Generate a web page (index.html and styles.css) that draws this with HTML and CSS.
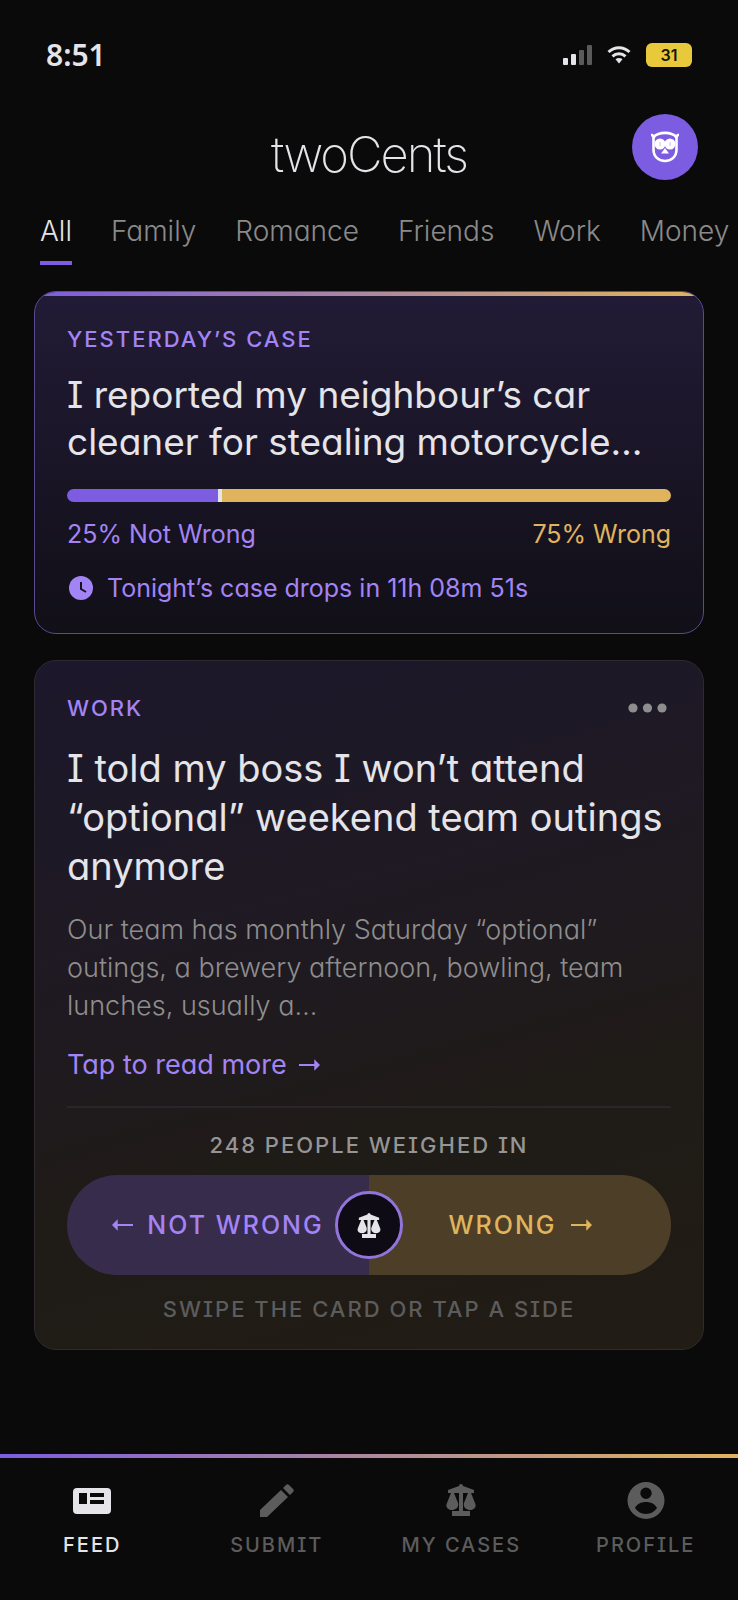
FILE: index.html
```html
<!DOCTYPE html>
<html lang="en">
<head>
    <meta charset="UTF-8">
    <meta name="viewport" content="width=device-width, initial-scale=1.0">
    <title>twoCents</title>
    <link rel="stylesheet" href="styles.css">
</head>
<body>
    <!-- Shared symbols -->
    <svg class="sprite" aria-hidden="true">
        <symbol id="scales" viewBox="0 0 30 32">
            <path d="M15 0a2 2 0 0 1 2 2l11 4v3h-3l4 10c2 4-1 7-5 7s-7-3-6-7l4-10h-5v18h7v5H6v-5h7V9H8l4 10c1 4-2 7-6 7s-7-3-5-7L5 9H2V6l11-4a2 2 0 0 1 2-2z"/>
        </symbol>
        <symbol id="arrow" viewBox="0 0 22 12">
            <path d="M0 5h16V0l6 6-6 6V7H0z"/>
        </symbol>
    </svg>

    <div class="status">
        <span class="time">8:51</span>
        <div class="status-icons">
            <svg width="29" height="20" viewBox="0 0 29 20">
                <g fill="#e4e4e9">
                    <rect y="13" width="5" height="7" rx="1"/>
                    <rect x="8" y="9" width="5" height="11" rx="1"/>
                </g>
                <g fill="#5a5a5a">
                    <rect x="16" y="5" width="5" height="15" rx="1"/>
                    <rect x="24" width="5" height="20" rx="1"/>
                </g>
            </svg>
            <svg class="wifi" width="24" height="18" viewBox="0 0 24 18">
                <g fill="none" stroke="#e4e4e9" stroke-width="3">
                    <path d="M1.500 6C7.500 .3 16.500 .3 22.500 6"/>
                    <path d="M5.500 10.300c3.700-3.400 9.300-3.400 13 0"/>
                </g>
                <path d="M8.500 13.200c2-1.700 5-1.700 7 0L12 17.500z" fill="#e4e4e9"/>
            </svg>
            <span class="battery">31</span>
        </div>
    </div>

    <header class="header">
        <h1>twoCents</h1>
        <button class="avatar" aria-label="Account">
            <svg width="28" height="32" viewBox="0 0 28 32" fill="none" stroke="#fff">
                <path d="M2.500 6C8 .5 20 .5 25.500 6v12.500c0 7-5 11.500-11.500 11.500S2.500 25.500 2.500 18.500z" stroke-width="2.600"/>
                <path d="M1 4l2 2M27 4l-2 2" stroke-width="2.600" stroke-linecap="round"/>
                <circle cx="9" cy="13" r="4.500" fill="#fff" stroke-width="2"/>
                <circle cx="19" cy="13" r="4.500" fill="#fff" stroke-width="2"/>
                <path d="M9 11v4M19 11v4" stroke="#c9bcf5"/>
                <path d="M14 17l4 5.500h-8z" fill="#fff" stroke="none"/>
            </svg>
        </button>
    </header>

    <nav class="tabs">
        <a href="#" class="active">All</a>
        <a href="#">Family</a>
        <a href="#">Romance</a>
        <a href="#">Friends</a>
        <a href="#">Work</a>
        <a href="#">Money</a>
    </nav>

    <main>
        <section class="card yesterday">
            <p class="label">YESTERDAY’S CASE</p>
            <h2>I reported my neighbour’s car cleaner for stealing motorcycle…</h2>
            <div class="bar">
                <div class="bar-left" style="width: 25%"></div>
                <div class="bar-right"></div>
            </div>
            <div class="legend">
                <span>25% Not Wrong</span>
                <span class="gold">75% Wrong</span>
            </div>
            <div class="timer">
                <svg width="24" height="24" viewBox="0 0 24 24">
                    <circle cx="12" cy="12" r="12" fill="#a384f5"/>
                    <path d="M12 6v7l5 3" fill="none" stroke="#16131f" stroke-width="2"/>
                </svg>
                <span>Tonight’s case drops in 11h 08m 51s</span>
            </div>
        </section>

        <section class="card case">
            <div class="case-top">
                <p class="label">WORK</p>
                <button class="more" aria-label="More options">
                    <svg width="39" height="10" viewBox="0 0 39 10" fill="#8e8e8e">
                        <circle cx="5" cy="5" r="4.600"/>
                        <circle cx="19.500" cy="5" r="4.600"/>
                        <circle cx="34" cy="5" r="4.600"/>
                    </svg>
                </button>
            </div>
            <h2>I told my boss I won’t attend “optional” weekend team outings anymore</h2>
            <p class="text">Our team has monthly Saturday “optional” outings, a brewery afternoon, bowling, team lunches, usually a…</p>
            <a href="#" class="read-more">Tap to read more <svg class="arrow"><use href="#arrow"/></svg></a>
            <hr>
            <p class="count">248 PEOPLE WEIGHED IN</p>
            <div class="vote">
                <button class="not-wrong"><svg class="arrow back"><use href="#arrow"/></svg>NOT WRONG</button>
                <button class="wrong">WRONG<svg class="arrow"><use href="#arrow"/></svg></button>
                <div class="knob"><svg width="24" height="25"><use href="#scales"/></svg></div>
            </div>
            <p class="hint">SWIPE THE CARD OR TAP A SIDE</p>
        </section>
    </main>

    <nav class="bottom-nav">
        <a href="#" class="active">
            <svg width="44" height="44" viewBox="0 0 44 44">
                <path fill-rule="evenodd" d="M7 9h30a4 4 0 0 1 4 4v18a4 4 0 0 1-4 4H7a4 4 0 0 1-4-4V13a4 4 0 0 1 4-4zm2 5v11h8V14zm11 0v4h14v-4zm0 7v4h14v-4z"/>
            </svg>
            FEED
        </a>
        <a href="#">
            <svg width="44" height="44" viewBox="0 0 44 44">
                <path d="M5 31l21-20 7 7-21 20H5zM28 9l3-3c1-1 2-1 3 0l4 4c1 1 1 2 0 3l-3 3z"/>
            </svg>
            SUBMIT
        </a>
        <a href="#">
            <svg width="44" height="44" viewBox="0 0 44 44">
                <use href="#scales" x="7" y="5" width="30" height="32"/>
            </svg>
            MY CASES
        </a>
        <a href="#">
            <svg width="44" height="44" viewBox="0 0 44 44">
                <path fill-rule="evenodd" d="M22 3a18.500 18.500 0 1 1 0 37 18.500 18.500 0 0 1 0-37zm0 5.500a5.700 5.700 0 1 0 0 11.400 5.700 5.700 0 0 0 0-11.400zM11 29c2 3 6 6 11 6s9-3 11-6c-2-4-6-6-11-6s-9 2-11 6z"/>
            </svg>
            PROFILE
        </a>
    </nav>
</body>
</html>
```

FILE: styles.css
```css
* {
    box-sizing: border-box;
}
body {
    margin: 0;
    min-height: 100vh;
    display: flex;
    flex-direction: column;
    background: #0a0a0a;
    color: #e4e4e9;
    font-family: Inter, "Open Sans", sans-serif;
    font-feature-settings: "cv11", "cv08";
    overflow-x: hidden;
}
h1, h2, p {
    margin: 0;
    font-weight: 400;
}
a {
    color: inherit;
    text-decoration: none;
}
button {
    padding: 0;
    border: 0;
    background: none;
    color: inherit;
    font: inherit;
    font-feature-settings: inherit;
    cursor: pointer;
}
svg {
    display: block;
    flex: none;
}
.sprite {
    position: absolute;
    width: 0;
    height: 0;
}

/* Status bar */
.status {
    display: flex;
    justify-content: space-between;
    align-items: center;
    padding: 35px 46px 0;
}
.time {
    font-family: "Noto Sans", sans-serif;
    font-size: 30px;
    font-weight: 600;
    line-height: 40px;
}
.status-icons {
    display: flex;
    align-items: center;
}
.wifi {
    margin: 0 15px;
}
.battery {
    width: 46px;
    border-radius: 6px;
    background: #e8c93c;
    color: #14140a;
    font-size: 16px;
    font-weight: 600;
    line-height: 24px;
    text-align: center;
}

/* Header */
.header {
    display: grid;
    grid-template-columns: 1fr auto 1fr;
    align-items: end;
    padding: 39px 40px 0;
}
.header h1 {
    grid-column: 2;
    font-size: 49px;
    font-weight: 200;
    line-height: 50px;
    letter-spacing: -2px;
}
.avatar {
    display: flex;
    align-items: center;
    justify-content: center;
    justify-self: end;
    width: 66px;
    height: 66px;
    border-radius: 50%;
    background: #7c5ce0;
}

/* Tabs */
.tabs {
    display: flex;
    gap: 39px;
    margin-top: 33px;
    padding-left: 40px;
    overflow: hidden;
    color: #8a8a8a;
    font-size: 28px;
    font-weight: 300;
    line-height: 36px;
}
.tabs a {
    padding-bottom: 12px;
    border-bottom: 4px solid transparent;
}
.tabs .active {
    border-color: #7c5ce0;
    color: #e4e4e9;
}

/* Cards */
main {
    display: flex;
    flex-direction: column;
    gap: 26px;
    padding: 26px 34px;
}
.card {
    padding: 33px 32px 26px;
    border: 1px solid #2e2a30;
    border-radius: 22px;
}
.label {
    color: #a384f5;
    font-size: 22px;
    font-weight: 500;
    line-height: 28px;
    letter-spacing: 2px;
}
.card.yesterday {
    position: relative;
    overflow: hidden;
    padding-bottom: 30px;
    border-color: #594a91;
    background: linear-gradient(#221b36, #110f17);
}
.yesterday::before {
    content: "";
    position: absolute;
    top: 0;
    left: 0;
    right: 0;
    height: 4px;
    background: linear-gradient(90deg, #7c5ce0, #e0b45c);
}
.yesterday h2 {
    margin-top: 18px;
    font-size: 37px;
    line-height: 47px;
}
.bar {
    display: flex;
    height: 13px;
    margin-top: 24px;
    border-radius: 7px;
    overflow: hidden;
}
.bar-left {
    background: #7c5ce0;
}
.bar-right {
    flex: 1;
    border-left: 4px solid #e4e4e9;
    background: #e0b45c;
}
.legend {
    display: flex;
    justify-content: space-between;
    margin-top: 17px;
    color: #a384f5;
    font-size: 25px;
    line-height: 30px;
}
.gold {
    color: #e0b45c;
}
.timer {
    display: flex;
    align-items: center;
    gap: 14px;
    margin-top: 24px;
    padding-left: 2px;
    color: #a384f5;
    font-size: 25px;
    line-height: 30px;
}

.case {
    background: linear-gradient(165deg, #1c172b, #1f1a20 45%, #1f1b17 65%, #211c14);
}
.case-top {
    display: flex;
    justify-content: space-between;
    align-items: center;
}
.more {
    margin-right: 4px;
}
.case h2 {
    margin-top: 22px;
    font-size: 38px;
    line-height: 49px;
}
.text {
    margin-top: 20px;
    color: #8e8e8e;
    font-size: 27px;
    font-weight: 300;
    line-height: 38px;
}
.read-more {
    display: flex;
    align-items: center;
    gap: 12px;
    margin-top: 22px;
    color: #a384f5;
    font-size: 27px;
    line-height: 36px;
}
.arrow {
    width: 21px;
    height: 12px;
    fill: currentColor;
}
.back {
    transform: scaleX(-1);
}
hr {
    height: 2px;
    margin: 23px 0;
    border: 0;
    background: #29252a;
}
.count, .hint {
    color: #959595;
    font-size: 22px;
    font-weight: 500;
    line-height: 28px;
    letter-spacing: 2px;
    text-align: center;
}
.vote {
    position: relative;
    display: grid;
    grid-template-columns: 1fr 1fr;
    height: 100px;
    margin: 16px 0 20px;
    border-radius: 50px;
    overflow: hidden;
}
.vote button {
    display: flex;
    align-items: center;
    justify-content: center;
    gap: 14px;
    font-size: 25px;
    font-weight: 500;
    letter-spacing: 2px;
}
.not-wrong {
    background: #382c4d;
    color: #a384f5;
}
.wrong {
    background: #4d3f27;
    color: #e0b45c;
}
.knob {
    position: absolute;
    top: 16px;
    left: calc(50% - 34px);
    display: flex;
    align-items: center;
    justify-content: center;
    width: 68px;
    height: 68px;
    border: 3px solid #9275dc;
    border-radius: 50%;
    background: #0e0b15;
    fill: #e4e4e9;
}
.hint {
    color: #5c5c5c;
}

/* Bottom navigation */
.bottom-nav {
    display: grid;
    grid-template-columns: repeat(4, 1fr);
    margin-top: auto;
    padding: 21px 0 43px;
    border-top: 4px solid;
    border-image: linear-gradient(90deg, #7c5ce0, #e0b45c) 1;
    color: #5c5c5c;
    font-size: 20px;
    font-weight: 500;
    line-height: 24px;
    letter-spacing: 2px;
}
.bottom-nav a {
    display: flex;
    flex-direction: column;
    align-items: center;
    gap: 10px;
}
.bottom-nav svg {
    fill: currentColor;
}
.bottom-nav .active {
    color: #e4e4e9;
}
```
